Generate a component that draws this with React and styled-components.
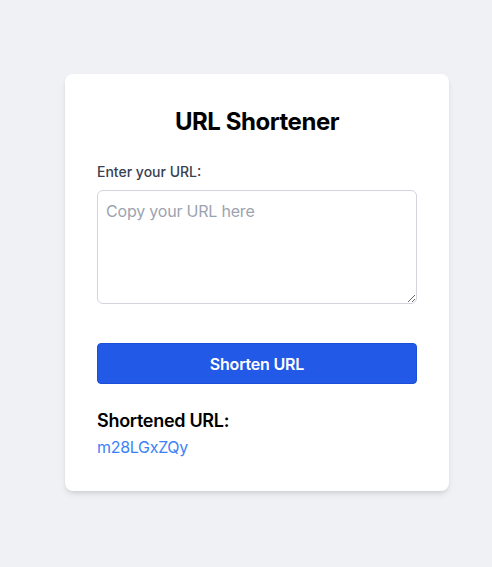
import React, { useState } from 'react'
import styled, { createGlobalStyle } from 'styled-components'

const GlobalStyle = createGlobalStyle`
  * { box-sizing: border-box; }
  html, body {
    margin: 0;
    padding: 0;
    background: #f0f1f5;
    font-family: Inter, "Noto Sans", sans-serif;
  }
`

const Page = styled.div`
  min-height: 567px;
  padding: 74px 0 0 65px;
`

const Card = styled.div`
  width: 384px;
  background: #ffffff;
  border-radius: 8px;
  padding: 32px;
  box-shadow: 0 4px 6px -1px rgba(0, 0, 0, 0.1), 0 2px 4px -2px rgba(0, 0, 0, 0.1);
`

const Title = styled.h1`
  margin: 0 0 24px;
  font-size: 24px;
  line-height: 32px;
  font-weight: 700;
  letter-spacing: -0.45px;
  text-align: center;
  color: #000;
`

const Label = styled.label`
  display: block;
  margin-bottom: 8px;
  font-size: 14px;
  line-height: 20px;
  font-weight: 500;
  color: #374151;
`

const TextArea = styled.textarea`
  display: block;
  width: 100%;
  height: 114px;
  padding: 8px;
  border: 1px solid #d1d5db;
  border-radius: 6px;
  font-family: inherit;
  font-size: 16px;
  line-height: 24px;
  letter-spacing: -0.2px;
  color: #111827;
  resize: vertical;
  outline: none;
  &::placeholder { color: #9ca3af; }
`

const Button = styled.button`
  display: block;
  width: 100%;
  margin-top: 39px;
  height: 41px;
  border: 1px solid #1d4ed8;
  border-radius: 4px;
  background: #2259e7;
  color: #fff;
  font-family: inherit;
  font-size: 16px;
  font-weight: 600;
  letter-spacing: -0.2px;
  cursor: pointer;
`

const Result = styled.div`
  margin-top: 23px;
`

const ResultTitle = styled.h2`
  margin: 0;
  font-size: 18px;
  line-height: 28px;
  font-weight: 600;
  letter-spacing: -0.3px;
  color: #000;
`

const Link = styled.a`
  display: block;
  font-size: 16px;
  line-height: 24px;
  letter-spacing: -0.3px;
  color: #3b82f6;
  text-decoration: none;
`

export default function App() {
  const [url, setUrl] = useState('')
  return (
    <>
      <GlobalStyle />
      <Page>
        <Card>
          <Title>URL Shortener</Title>
          <Label htmlFor="url">Enter your URL:</Label>
          <TextArea
            id="url"
            placeholder="Copy your URL here"
            value={url}
            onChange={e => setUrl(e.target.value)}
          />
          <Button>Shorten URL</Button>
          <Result>
            <ResultTitle>Shortened URL:</ResultTitle>
            <Link href="#">m28LGxZQy</Link>
          </Result>
        </Card>
      </Page>
    </>
  )
}
